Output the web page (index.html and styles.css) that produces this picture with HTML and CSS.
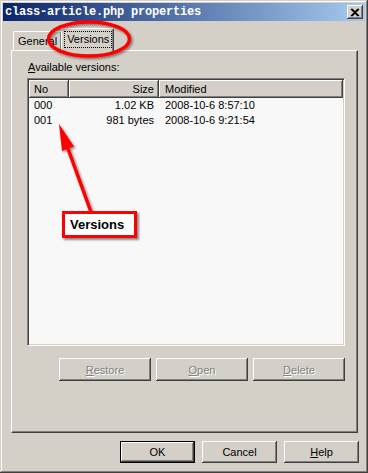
FILE: index.html
```html
<!DOCTYPE html>
<html lang="en">
<head>
  <meta charset="UTF-8" />
  <title>class-article.php properties</title>
  <link rel="stylesheet" href="styles.css">
</head>
<body>

  <!-- Properties dialog -->
  <div class="window">
    <div class="titlebar">
      <span class="title">class-article.php properties</span>
      <span class="close">
        <svg width="10" height="9" viewBox="0 0 10 9"><path d="M1 1 L8 8 M2 1 L9 8 M8 1 L1 8 M9 1 L2 8" stroke="#000" stroke-width="1.2"/></svg>
      </span>
    </div>

    <!-- Tabs -->
    <div class="tabs">
      <div class="tab">General</div>
      <div class="tab active"><span class="focus">Versions</span></div>
    </div>

    <div class="panel">
      <div class="label"><u>A</u>vailable versions:</div>

      <div class="listview">
        <div class="row header">
          <div class="col col-no">No</div>
          <div class="col col-size">Size</div>
          <div class="col col-mod">Modified</div>
        </div>
        <div class="row">
          <div class="col col-no">000</div>
          <div class="col col-size">1.02 KB</div>
          <div class="col col-mod">2008-10-6 8:57:10</div>
        </div>
        <div class="row">
          <div class="col col-no">001</div>
          <div class="col col-size">981 bytes</div>
          <div class="col col-mod">2008-10-6 9:21:54</div>
        </div>
      </div>

      <div class="actions">
        <button class="btn disabled"><u>R</u>estore</button>
        <button class="btn disabled"><u>O</u>pen</button>
        <button class="btn disabled"><u>D</u>elete</button>
      </div>
    </div>

    <div class="footer">
      <button class="btn small default">OK</button>
      <button class="btn small">Cancel</button>
      <button class="btn small"><u>H</u>elp</button>
    </div>
  </div>

  <!-- Red annotations drawn over the dialog -->
  <svg class="marks" width="368" height="473" viewBox="0 0 368 473">
    <defs>
      <filter id="shadow" x="-20%" y="-20%" width="140%" height="140%">
        <feDropShadow dx="1.5" dy="1.5" stdDeviation="1" flood-color="#000" flood-opacity="0.45"/>
      </filter>
    </defs>
    <ellipse cx="89" cy="39" rx="40.5" ry="17" fill="none" stroke="#f00" stroke-width="3.5" filter="url(#shadow)"/>
    <g filter="url(#shadow)">
      <line x1="91" y1="212" x2="67" y2="146" stroke="#f00" stroke-width="3.5"/>
      <polygon points="59,124 74,146.5 62,151" fill="#f00"/>
    </g>
  </svg>
  <div class="callout">Versions</div>

</body>
</html>
```

FILE: styles.css
```css
/* Classic dialog look */
body {
  margin: 0;
  padding: 0;
  font-family: "Liberation Sans", Arial, sans-serif;
  font-size: 11px;
  color: #000;
}

.window {
  position: relative;
  width: 368px;
  height: 473px;
  box-sizing: border-box;
  padding: 3px;
  background-color: #d4d0c8;
  box-shadow: inset -1px -1px #404040, inset 1px 1px #d4d0c8,
              inset -2px -2px #808080, inset 2px 2px #fff;
  display: flex;
  flex-direction: column;
}

.titlebar {
  height: 18px;
  display: flex;
  align-items: center;
  justify-content: space-between;
  padding: 0 2px 0 2px;
  background: linear-gradient(to right, #0a246a, #a6caf0);
}

.title {
  color: #fff;
  font-family: "Liberation Mono", "Courier New", monospace;
  font-weight: bold;
  font-size: 12px;
  letter-spacing: -0.2px;
}

.close {
  width: 16px;
  height: 14px;
  display: flex;
  align-items: center;
  justify-content: center;
  background-color: #d4d0c8;
  box-shadow: inset -1px -1px #404040, inset 1px 1px #fff, inset -2px -2px #808080;
}

/* Tab strip */
.tabs {
  display: flex;
  align-items: flex-end;
  height: 22px;
  margin: 7px 0 0 8px;
  padding-left: 2px;
}

.tab {
  height: 19px;
  padding: 0 4px;
  line-height: 19px;
  box-sizing: border-box;
  border-top: 1px solid #fff;
  border-left: 1px solid #fff;
  border-right: 1px solid #404040;
  box-shadow: inset -1px 0 #808080;
  border-radius: 2px 2px 0 0;
}

.tab.active {
  height: 23px;
  margin: 0 0 -1px -1px;
  padding: 2px 2px 0 3px;
  line-height: 16px;
  position: relative;
  background-color: #d4d0c8;
}

.focus {
  display: inline-block;
  padding: 0 2px;
  outline: 1px dotted #000;
  line-height: 15px;
}

/* Tab page */
.panel {
  margin: 0 7px 0 8px;
  height: 383px;
  box-sizing: border-box;
  border-top: 1px solid #fff;
  border-left: 1px solid #fff;
  border-right: 1px solid #404040;
  border-bottom: 1px solid #404040;
  box-shadow: inset -1px -1px #808080;
  padding: 10px 12px 0 15px;
}

.label {
  height: 17px;
  line-height: 13px;
  margin-left: 1px;
}

.listview {
  height: 268px;
  box-sizing: border-box;
  background-color: #f8f8f8;
  border-top: 1px solid #808080;
  border-left: 1px solid #808080;
  border-right: 1px solid #fff;
  border-bottom: 1px solid #fff;
  box-shadow: inset 1px 1px #404040, inset -1px -1px #d4d0c8;
  padding: 1px;
}

.row {
  display: flex;
  height: 15px;
  line-height: 15px;
}

.row.header {
  height: 18px;
  line-height: 18px;
}

.header .col {
  background-color: #d4d0c8;
  box-shadow: inset -1px -1px #404040, inset 1px 1px #fff, inset -2px -2px #808080;
}

.col {
  box-sizing: border-box;
  white-space: nowrap;
}

.col-no {
  width: 40px;
  padding-left: 5px;
}

.col-size {
  width: 90px;
  text-align: right;
  padding-right: 5px;
}

.col-mod {
  width: 184px;
  padding-left: 6px;
}

/* Buttons */
.actions {
  display: flex;
  justify-content: flex-end;
  gap: 5px;
  margin-top: 12px;
}

.btn {
  width: 92px;
  height: 23px;
  padding: 0;
  border: none;
  font-family: "Liberation Sans", Arial, sans-serif;
  font-size: 11px;
  color: #000;
  background-color: #d4d0c8;
  box-shadow: inset -1px -1px #404040, inset 1px 1px #fff, inset -2px -2px #808080;
}

.btn.disabled {
  color: #808080;
  text-shadow: 1px 1px #fff;
}

.btn.small {
  width: 75px;
  height: 22px;
}

.btn.default {
  box-shadow: inset 0 0 0 1px #000, inset -2px -2px #404040, inset 2px 2px #fff, inset -3px -3px #808080;
}

.footer {
  display: flex;
  justify-content: flex-end;
  gap: 7px;
  margin-top: 8px;
  padding-right: 6px;
}

/* Annotation overlay */
.marks {
  position: absolute;
  left: 0;
  top: 0;
  pointer-events: none;
}

.callout {
  position: absolute;
  left: 62px;
  top: 211px;
  width: 75px;
  height: 27px;
  box-sizing: border-box;
  border: 3px solid #f00;
  background-color: #fff;
  font-family: "Liberation Sans", Arial, sans-serif;
  font-weight: bold;
  font-size: 13px;
  line-height: 21px;
  padding-left: 5px;
  box-shadow: 2px 2px 2px rgba(0,0,0,0.45);
}
```
